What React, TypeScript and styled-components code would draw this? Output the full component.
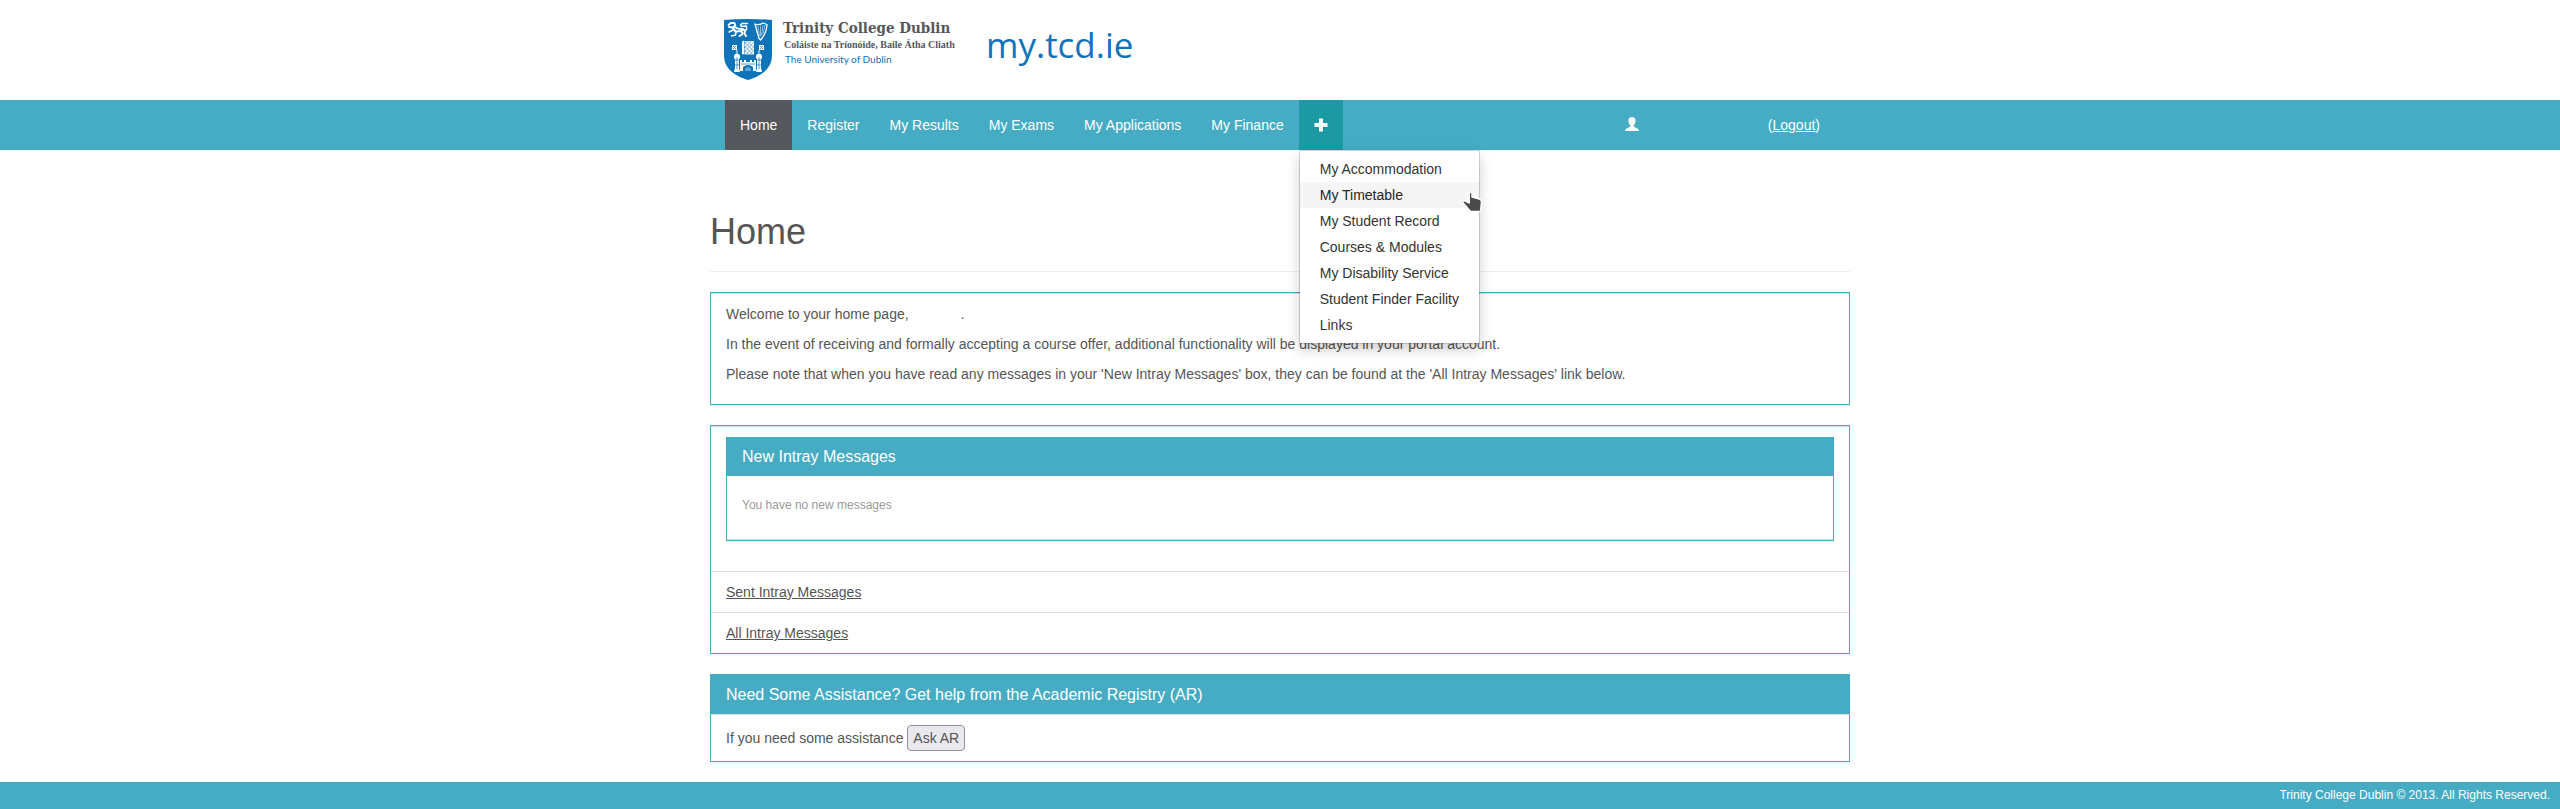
import React from 'react';
import styled, { createGlobalStyle } from 'styled-components';

const teal = '#45acc4';
const trinityBlue = '#0e73b9';
const slate = '#54575c';

const GlobalStyle = createGlobalStyle`
  *, *::before, *::after { box-sizing: border-box; }
  body {
    margin: 0;
    background: #fff;
    color: #555;
    font: 14px/20px "Liberation Sans", Arial, sans-serif;
  }
`;

const Container = styled.div`
  max-width: 1140px;
  margin: 0 auto;
`;

const Masthead = styled.header`
  height: 100px;
`;

const Brand = styled(Container)`
  display: flex;
  align-items: flex-start;
  padding: 19px 14px 0;
`;

const BrandText = styled.div`
  display: flex;
  flex: 0 0 214px;
  flex-direction: column;
  padding-left: 11px;
  white-space: nowrap;
`;

const CollegeName = styled.span`
  color: ${slate};
  font: bold 15px/19px "DejaVu Serif Condensed", "DejaVu Serif", serif;
`;

const IrishName = styled.span`
  padding-left: 1px;
  color: ${slate};
  font: bold 10px/14px "Liberation Serif", serif;
`;

const UniversityName = styled.span`
  padding-left: 2px;
  color: ${trinityBlue};
  font: 10px/15px Lato, "Noto Sans", sans-serif;
`;

const SiteName = styled.span`
  color: ${trinityBlue};
  font: 35px/52px "Open Sans", "Noto Sans", sans-serif;
`;

const NavBar = styled.nav`
  background: ${teal};
`;

const NavRow = styled(Container)`
  display: flex;
  padding: 0 15px;
`;

const NavList = styled.ul`
  display: flex;
  margin: 0;
  padding: 0;
  list-style: none;
`;

const NavItem = styled.li`
  position: relative;
`;

const NavLink = styled.a<{ $active?: boolean }>`
  display: block;
  padding: 15px;
  color: #fff;
  background: ${(p) => (p.$active ? slate : 'transparent')};
  text-decoration: none;
`;

const MoreButton = styled.button`
  display: flex;
  align-items: center;
  height: 50px;
  padding: 0 15px;
  border: 0;
  background: #1b9aa3;
  color: #fff;
`;

const Menu = styled.ul`
  position: absolute;
  top: 100%;
  left: 0;
  z-index: 10;
  margin: 0;
  padding: 5px 0;
  list-style: none;
  white-space: nowrap;
  background: #fff;
  background-clip: padding-box;
  border: 1px solid rgba(0, 0, 0, 0.15);
  box-shadow: 0 6px 12px rgba(0, 0, 0, 0.175);
`;

const MenuLink = styled.a<{ $hover?: boolean }>`
  display: block;
  padding: 3px 20px;
  color: ${(p) => (p.$hover ? '#262626' : '#333')};
  background: ${(p) => (p.$hover ? '#f5f5f5' : '#fff')};
  text-decoration: none;
`;

const Pointer = styled.svg`
  position: absolute;
  top: 39px;
  right: -4px;
`;

const Account = styled.div`
  display: flex;
  justify-content: space-between;
  width: 225px;
  margin-left: auto;
  padding: 15px;
  color: #fff;

  a { color: inherit; }
  svg { margin-top: 2px; }
`;

const Main = styled(Container).attrs({ as: 'main' })`
  padding-top: 61px;
`;

const PageTitle = styled.h1`
  margin: 0 0 20px;
  padding-bottom: 19px;
  border-bottom: 1px solid #eee;
  font-size: 36px;
  font-weight: 400;
  line-height: 41px;
`;

const Panel = styled.section`
  margin-bottom: 20px;
  border: 1px solid ${teal};
  box-shadow: 0 1px 1px rgba(0, 0, 0, 0.05);
`;

const PanelHeading = styled.h2`
  margin: 0;
  padding: 10px 15px;
  background: ${teal};
  color: #fff;
  font-size: 16px;
  font-weight: 400;
  line-height: 19px;
`;

const PanelRow = styled.div`
  padding: 10px 15px;
  border-top: 1px solid #ddd;

  p { margin: 0 0 10px; }
  a { color: inherit; }
`;

const InboxPanel = styled(Panel)`
  h2 { line-height: 18px; }
`;

const InboxBody = styled.div`
  padding: 20px 15px 25px;
  border-bottom: 1px solid #ddd;
  color: #999;
  font-size: 12px;
  line-height: 18px;
`;

const NameSpace = styled.span`
  display: inline-block;
  width: 48px;
`;

const AskButton = styled.button`
  height: 26px;
  padding: 0 5px 1px;
  border: 1px solid #8f8f9d;
  border-radius: 4px;
  background: #e9e9ed;
  color: #555;
  font: inherit;
  line-height: 20px;
  vertical-align: top;
`;

const AskRow = styled(PanelRow)`
  line-height: 26px;
`;

const Footer = styled.footer`
  padding: 5px 10px;
  background: ${teal};
  color: #fff;
  font-size: 12px;
  line-height: 17px;
  text-align: right;
`;

const Crest = () => (
  <svg width="48" height="61" viewBox="0 0 48 61" role="img" aria-label="Trinity College Dublin crest">
    <path d="M0 1Q24-1 48 1V36C48 50 37 57 24 61C11 57 0 50 0 36Z" fill={trinityBlue} />
    <g fill="none" stroke="#fff" strokeLinecap="round" strokeLinejoin="round">
      <path d="M4.500 6L7 3.800l3.500.2 1 2.500-2.500 2-4-.5" strokeWidth="1.800" />
      <path d="M10 7.500q3 3 8 2.500l3 1.500-.5 3 1.500 2.500M9 9.500l2.500 3 6-.5 1 3-3 2" strokeWidth="2" />
      <path d="M5 13l4-2M7.500 17l4-1 .5-2.500M23.500 4.500H18l-1.500 1.500 1 1.500 5-.5v4" strokeWidth="1.400" />
      <path d="M31 5q5 1.500 8-1l4 1.500q-.5 9-6.500 15.500l-1.500-1.500Z" strokeWidth="1.300" />
      <path d="M34 7l1.500 10M36.500 7v10M39 6.500l-1.500 10M41 6.500l-2 8" strokeWidth="0.500" />
    </g>
    <g fill="#fff">
      <path d="M18 22.500l2-1V35l-2 .5zM20.500 22H30v13.500h-9.500z" />
      <path d="M8 26h5v5H8zM35 26h5v5h-5z" />
      <path d="M12.500 31h1v5h-1zM34.500 31h1v5h-1z" />
      <path d="M10 37l1-2h4l1 2v2l-1 1v9l1 4H10l1-4v-9l-1-1zM32 37l1-2h4l1 2v2l-1 1v9l1 4h-6l1-4v-9l-1-1z" />
      <path d="M16 41h2v2h2v-2h2v2h4v-2h2v2h2v-2h2v11h-3v-4q-5-4-10 0v4h-3z" />
    </g>
    <g stroke={trinityBlue} strokeWidth="0.700" fill="none">
      <path d="M20.500 25l3-3M20.500 29l7-7M20.500 33l9.500-10M22 35.500l8-8M26 35.500l4-4M20.500 31l4.500 4.500M20.500 27l8.500 8.500M20.500 23l9.500 9.500M23.500 22l6.500 6.500" opacity="0.700" />
      <path d="M9 27l3 3M9 30l3-3M36 27l3 3M36 30l3-3M13 38v12M35 38v12M11 41h4M33 41h4M11 46h4M33 46h4M17 45h14" />
      <path d="M22 52v-3M24 52v-4M26 52v-3" stroke="#fff" />
    </g>
  </svg>
);

const PlusIcon = () => (
  <svg width="14" height="14" viewBox="0 0 14 14" aria-hidden="true">
    <path d="M5 0.500h4v4.500h4.500v4H9v4.500H5V9H0.500V5H5z" fill="currentColor" />
  </svg>
);

const UserIcon = () => (
  <svg width="14" height="14" viewBox="0 0 14 14" aria-hidden="true">
    <path
      d="M7 0c2.300 0 3.600 1.300 3.600 3.600 0 1.800-.7 3.500-1.700 4.600-.5.600-.3 1.300.5 1.700l3 1.500c1 .5 1.600 1 1.600 2.600H0c0-1.600.6-2.100 1.600-2.600l3-1.500c.8-.4 1-1.100.5-1.700C4.100 7.100 3.400 5.400 3.400 3.600 3.400 1.300 4.700 0 7 0z"
      fill="currentColor"
    />
  </svg>
);

const HandPointer = () => (
  <Pointer width="22" height="23" viewBox="0 0 22 23" aria-hidden="true">
    <path
      d="M8.200 3Q9.700 1.500 11 3V7l7.500 2q2 1 2 3l-1 9.500H9.500L6.500 18 1.800 12.500q-.5-2 1.700-1.800L8.200 13z"
      fill="#4a4a4a"
      stroke="#fff"
      strokeWidth="1.500"
      strokeLinejoin="round"
    />
  </Pointer>
);

const tabs = ['Home', 'Register', 'My Results', 'My Exams', 'My Applications', 'My Finance'];

const moreLinks = [
  'My Accommodation',
  'My Timetable',
  'My Student Record',
  'Courses & Modules',
  'My Disability Service',
  'Student Finder Facility',
  'Links',
];

export default function App() {
  return (
    <>
      <GlobalStyle />
      <Masthead>
        <Brand>
          <Crest />
          <BrandText>
            <CollegeName>Trinity College Dublin</CollegeName>
            <IrishName>Coláiste na Tríonóide, Baile Átha Cliath</IrishName>
            <UniversityName>The University of Dublin</UniversityName>
          </BrandText>
          <SiteName>my.tcd.ie</SiteName>
        </Brand>
      </Masthead>

      <NavBar>
        <NavRow>
          <NavList>
            {tabs.map((tab) => (
              <NavItem key={tab}>
                <NavLink href="#" $active={tab === 'Home'}>{tab}</NavLink>
              </NavItem>
            ))}
            <NavItem>
              <MoreButton type="button" aria-label="More" aria-expanded="true">
                <PlusIcon />
              </MoreButton>
              <Menu>
                {moreLinks.map((link) => (
                  <li key={link}>
                    <MenuLink href="#" $hover={link === 'My Timetable'}>{link}</MenuLink>
                  </li>
                ))}
                <HandPointer />
              </Menu>
            </NavItem>
          </NavList>
          <Account>
            <UserIcon />
            <span>(<a href="#">Logout</a>)</span>
          </Account>
        </NavRow>
      </NavBar>

      <Main>
        <PageTitle>Home</PageTitle>

        <Panel>
          <PanelRow>
            <p>Welcome to your home page, <NameSpace />.</p>
            <p>
              In the event of receiving and formally accepting a course offer, additional
              functionality will be displayed in your portal account.
            </p>
            <p>
              Please note that when you have read any messages in your 'New Intray Messages' box,
              they can be found at the 'All Intray Messages' link below.
            </p>
          </PanelRow>
        </Panel>

        <Panel>
          <PanelRow>
            <InboxPanel>
              <PanelHeading>New Intray Messages</PanelHeading>
              <InboxBody>You have no new messages</InboxBody>
            </InboxPanel>
          </PanelRow>
          <PanelRow><a href="#">Sent Intray Messages</a></PanelRow>
          <PanelRow><a href="#">All Intray Messages</a></PanelRow>
        </Panel>

        <Panel>
          <PanelHeading>Need Some Assistance? Get help from the Academic Registry (AR)</PanelHeading>
          <AskRow>
            If you need some assistance <AskButton type="button">Ask AR</AskButton>
          </AskRow>
        </Panel>
      </Main>

      <Footer>Trinity College Dublin © 2013. All Rights Reserved.</Footer>
    </>
  );
}
